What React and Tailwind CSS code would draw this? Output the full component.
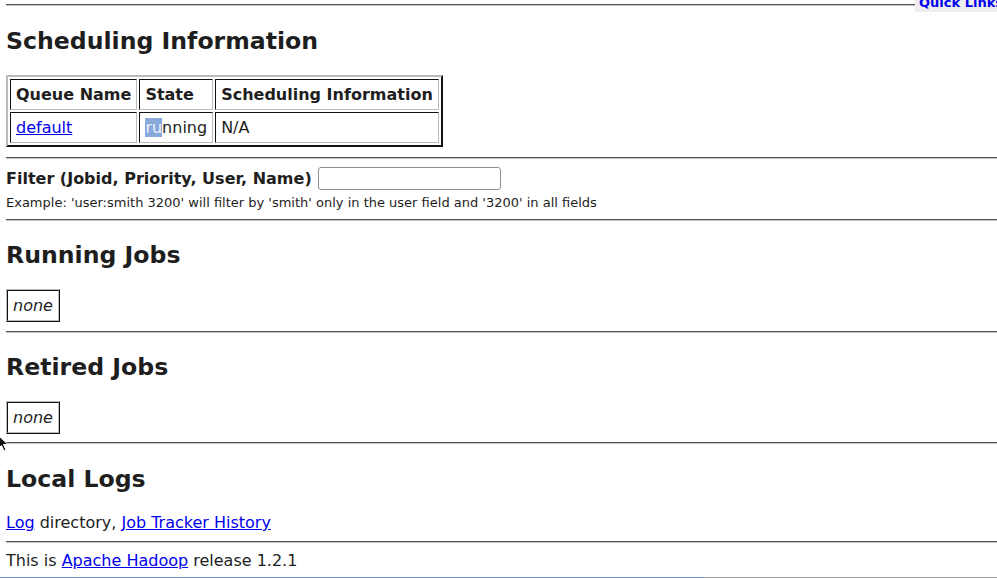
export default function App() {
  const hr = "h-[2px] border-t border-t-[#555] border-b border-b-[#c4c4c4]";
  const cell =
    "border border-t-[#111] border-l-[#111] border-r-[#bbb] border-b-[#bbb] p-[5px] text-left";
  const tbl =
    "border-separate border-spacing-[2px] border-2 border-t-[#bbb] border-l-[#bbb] border-r-[#111] border-b-[#111]";
  const tbl1 =
    "border-separate border-spacing-0 border border-t-[#bbb] border-l-[#bbb] border-r-[#111] border-b-[#111]";
  const link = "text-[#0000ee] underline";
  const h2 = "text-[23.6px] font-bold leading-[28px]";
  return (
    <div className="relative w-[997px] h-[578px] overflow-hidden bg-white text-[#1e1e1e] font-['DejaVu_Sans',sans-serif] text-[16px] leading-[normal]">
      <div className="pl-[6px] pt-[4px]">
        <div className={hr} />
        <h2 className={"mt-[21px] " + h2}>Scheduling Information</h2>
        <table className={"mt-[20px] " + tbl}>
          <tbody>
            <tr>
              <th className={cell + " font-bold"}>Queue Name</th>
              <th className={cell + " font-bold"}>State</th>
              <th className={cell + " font-bold"}>Scheduling Information</th>
            </tr>
            <tr>
              <td className={cell}>
                <a className={link}>default</a>
              </td>
              <td className={cell}>
                <span className="bg-[#87a9db] text-[#eef2fa]">ru</span>nning
              </td>
              <td className={cell}>N/A</td>
            </tr>
          </tbody>
        </table>
        <div className={"mt-[10px] " + hr} />
        <div className="mt-[7px] flex items-center h-[24px]">
          <b className="font-bold">Filter (Jobid, Priority, User, Name)</b>
          <input
            type="text"
            className="ml-[6px] w-[183px] h-[23px] border border-[#8f8f8f] rounded-[3px] bg-white"
          />
        </div>
        <div className="mt-[5px] text-[13px] leading-[15px]">
          Example: 'user:smith 3200' will filter by 'smith' only in the user field and '3200' in all fields
        </div>
        <div className={"mt-[9px] " + hr} />
        <h2 className={"mt-[20px] " + h2}>Running Jobs</h2>
        <table className={"mt-[20px] " + tbl1}>
          <tbody>
            <tr>
              <td className={cell + " text-center"}>
                <i>none</i>
              </td>
            </tr>
          </tbody>
        </table>
        <div className={"mt-[9px] " + hr} />
        <h2 className={"mt-[20px] " + h2}>Retired Jobs</h2>
        <table className={"mt-[20px] " + tbl1}>
          <tbody>
            <tr>
              <td className={cell + " text-center"}>
                <i>none</i>
              </td>
            </tr>
          </tbody>
        </table>
        <div className={"mt-[8px] " + hr} />
        <h2 className={"mt-[21px] " + h2}>Local Logs</h2>
        <p className="mt-[20px]">
          <a className={link}>Log</a> directory, <a className={link}>Job Tracker History</a>
        </p>
        <div className={"mt-[9px] " + hr} />
        <p className="mt-[8px]">
          This is <a className={link}>Apache Hadoop</a> release 1.2.1
        </p>
      </div>

      <div className="absolute left-[915px] top-0 w-[82px] h-[12px] bg-[#eeeeee] overflow-hidden">
        <span className="absolute left-[4px] top-[-5px] text-[13px] font-bold leading-[15px] text-[#0000ee] whitespace-nowrap">
          Quick Links
        </span>
      </div>

      <svg className="absolute left-[-3px] top-[434px]" width="14" height="20" viewBox="0 0 14 20">
        <polygon points="1,1 1,15 4.5,11.5 7,17 9,16 6.5,10.5 11,10.5" fill="#111" stroke="#fff" strokeWidth="1" />
      </svg>

      <div className="absolute left-0 bottom-0 w-full h-[1px] flex">
        <div className="w-[704px] bg-[#6f8cb8]" />
        <div className="flex-1 bg-[#9a9a9a]" />
      </div>
    </div>
  );
}
